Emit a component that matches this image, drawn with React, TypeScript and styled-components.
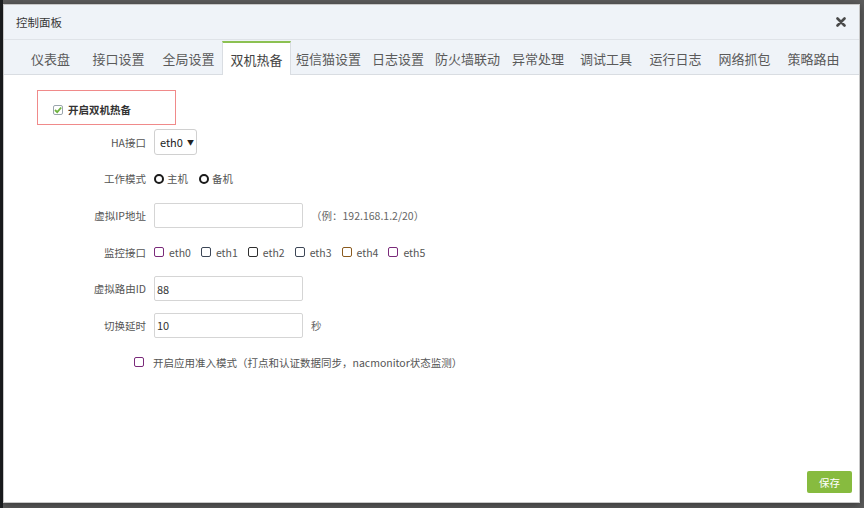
import React from "react";
import styled, { createGlobalStyle } from "styled-components";

const GlobalStyle = createGlobalStyle`
  html, body {
    margin: 0;
    padding: 0;
    height: 100%;
  }
  body {
    background: linear-gradient(to right, #1d1f21 0 3px, #5c5c5c 3px);
    font-family: "Noto Sans CJK SC", "Noto Sans", sans-serif;
    font-size: 10.5px;
    color: #555;
  }
  #root {
    height: 100%;
  }
`;

const Screen = styled.div`
  height: 508px;
  width: 864px;
  padding: 4px 4px 5px 3px;
  box-sizing: border-box;
  display: flex;
`;

const Modal = styled.div`
  flex: 1;
  display: flex;
  flex-direction: column;
  background: #fff;
  border: 1px solid #c8c8c8;
  box-sizing: border-box;
  box-shadow: 0 2px 8px rgba(0, 0, 0, 0.4);
`;

const Header = styled.div`
  height: 34px;
  display: flex;
  align-items: center;
  justify-content: space-between;
  padding: 0 12px 0 12px;
  background: #eff3f8;
  border-bottom: 1px solid #dfe3e8;
`;

const Title = styled.span`
  font-size: 11.5px;
  color: #393939;
`;

const CloseButton = styled.button`
  border: none;
  background: none;
  padding: 0;
  width: 12px;
  height: 12px;
  display: flex;
  align-items: center;
  justify-content: center;
  cursor: pointer;
`;

const TabBar = styled.div`
  height: 34px;
  display: flex;
  align-items: flex-end;
  padding-left: 15px;
  background: #eff3f8;
  border-bottom: 1px solid #d9dde2;
`;

const Tab = styled.div<{ $w: number; $active?: boolean }>`
  width: ${(p) => p.$w}px;
  height: ${(p) => (p.$active ? "34px" : "33px")};
  margin-bottom: ${(p) => (p.$active ? "-1px" : "0")};
  box-sizing: border-box;
  display: flex;
  align-items: center;
  justify-content: center;
  font-size: 13px;
  color: ${(p) => (p.$active ? "#444" : "#5a5a5a")};
  background: ${(p) => (p.$active ? "#fff" : "transparent")};
  border-top: ${(p) => (p.$active ? "2px solid #8cc152" : "none")};
  border-left: ${(p) => (p.$active ? "1px solid #d9dde2" : "none")};
  border-right: ${(p) => (p.$active ? "1px solid #d9dde2" : "none")};
  padding-top: ${(p) => (p.$active ? "0" : "2px")};
`;

const Body = styled.div`
  flex: 1;
  padding: 15px 0 0 33px;
  display: flex;
  flex-direction: column;
`;

const EnableBox = styled.div`
  width: 139px;
  height: 35px;
  box-sizing: border-box;
  border: 1px solid #f08a8a;
  display: flex;
  align-items: center;
  padding: 4px 0 0 15px;
  gap: 5px;
  font-weight: bold;
  color: #333;
  font-size: 10.5px;
`;

const CheckedBox = styled.span`
  width: 10px;
  height: 10px;
  box-sizing: border-box;
  border: 1px solid #9aa5ad;
  border-radius: 2px;
  display: flex;
  align-items: center;
  justify-content: center;
`;

const Form = styled.div`
  margin-top: 4px;
  display: flex;
  flex-direction: column;
  gap: 10.7px;
`;

const Row = styled.div`
  height: 26px;
  display: flex;
  align-items: center;
`;

const Label = styled.label`
  width: 117px;
  text-align: right;
  padding-right: 8px;
  box-sizing: border-box;
  color: #555;
  flex-shrink: 0;
`;

const FakeSelect = styled.div`
  width: 43px;
  height: 26px;
  box-sizing: border-box;
  border: 1px solid #d0d0d0;
  border-radius: 3px;
  display: flex;
  align-items: center;
  padding-left: 5px;
  gap: 4px;
  color: #222;
  font-size: 11px;
  background: #fff;
`;

const Caret = styled.span`
  font-size: 7px;
  color: #222;
`;

const RadioItem = styled.label`
  display: flex;
  align-items: center;
  gap: 3px;
  margin-right: 11px;
  color: #555;
`;

const RadioRing = styled.span`
  width: 10px;
  height: 10px;
  box-sizing: border-box;
  border: 2px solid #1a1a1a;
  border-radius: 50%;
`;

const TextInput = styled.input`
  width: 149px;
  height: 25px;
  box-sizing: border-box;
  border: 1px solid #d5d5d5;
  border-radius: 2px;
  padding: 0 0 0 2px;
  font-family: inherit;
  font-size: 11px;
  color: #333;
  outline: none;
`;

const Hint = styled.span`
  margin-left: 8px;
  color: #666;
`;

const CheckItem = styled.label`
  display: flex;
  align-items: center;
  gap: 5px;
  margin-right: 10px;
  color: #555;
`;

const Square = styled.span<{ $c: string }>`
  width: 10px;
  height: 10px;
  box-sizing: border-box;
  border: 1.5px solid ${(p) => p.$c};
  border-radius: 2px;
  flex-shrink: 0;
`;

const AdmissionRow = styled.div`
  height: 26px;
  display: flex;
  align-items: center;
  padding-left: 97px;
  gap: 9px;
  color: #555;
`;

const Footer = styled.div`
  display: flex;
  justify-content: flex-end;
  padding: 0 7px 9px 0;
`;

const SaveButton = styled.button`
  width: 45px;
  height: 22px;
  border: none;
  border-radius: 2px;
  background: #87bb3f;
  color: #fff;
  font-family: inherit;
  font-size: 10.5px;
  cursor: pointer;
`;

const tabs: [string, number][] = [
  ["仪表盘", 63],
  ["接口设置", 73],
  ["全局设置", 67],
  ["双机热备", 69],
  ["短信猫设置", 75],
  ["日志设置", 64],
  ["防火墙联动", 75],
  ["异常处理", 66],
  ["调试工具", 70],
  ["运行日志", 69],
  ["网络抓包", 69],
  ["策略路由", 69],
];

const monitors: [string, string][] = [
  ["eth0", "#7a2a7a"],
  ["eth1", "#3c4656"],
  ["eth2", "#2e2e2e"],
  ["eth3", "#3c4656"],
  ["eth4", "#8a5a1e"],
  ["eth5", "#7a2a7a"],
];

export default function App() {
  return (
    <>
      <GlobalStyle />
      <Screen>
        <Modal>
          <Header>
            <Title>控制面板</Title>
            <CloseButton aria-label="close">
              <svg width="10" height="10" viewBox="0 0 10 10">
                <path d="M1.5 1.5 L8.5 8.5 M8.5 1.5 L1.5 8.5" stroke="#4a4a4a" strokeWidth="2.6" strokeLinecap="round" />
              </svg>
            </CloseButton>
          </Header>

          <TabBar>
            {tabs.map(([name, w]) => (
              <Tab key={name} $w={w} $active={name === "双机热备"}>
                {name}
              </Tab>
            ))}
          </TabBar>

          <Body>
            <EnableBox>
              <CheckedBox>
                <svg width="8" height="8" viewBox="0 0 8 8">
                  <path d="M1 4 L3.2 6.2 L7.2 1.5" stroke="#6fb33f" strokeWidth="1.8" fill="none" />
                </svg>
              </CheckedBox>
              开启双机热备
            </EnableBox>

            <Form>
              <Row>
                <Label>HA接口</Label>
                <FakeSelect>
                  eth0 <Caret>▼</Caret>
                </FakeSelect>
              </Row>

              <Row>
                <Label>工作模式</Label>
                <RadioItem>
                  <RadioRing />
                  主机
                </RadioItem>
                <RadioItem>
                  <RadioRing />
                  备机
                </RadioItem>
              </Row>

              <Row>
                <Label>虚拟IP地址</Label>
                <TextInput defaultValue="" />
                <Hint>（例：192.168.1.2/20）</Hint>
              </Row>

              <Row>
                <Label>监控接口</Label>
                {monitors.map(([name, c]) => (
                  <CheckItem key={name}>
                    <Square $c={c} />
                    {name}
                  </CheckItem>
                ))}
              </Row>

              <Row>
                <Label>虚拟路由ID</Label>
                <TextInput defaultValue="88" />
              </Row>

              <Row>
                <Label>切换延时</Label>
                <TextInput defaultValue="10" />
                <Hint>秒</Hint>
              </Row>

              <AdmissionRow>
                <Square $c="#7a2a7a" />
                开启应用准入模式（打点和认证数据同步，nacmonitor状态监测）
              </AdmissionRow>
            </Form>
          </Body>

          <Footer>
            <SaveButton>保存</SaveButton>
          </Footer>
        </Modal>
      </Screen>
    </>
  );
}
